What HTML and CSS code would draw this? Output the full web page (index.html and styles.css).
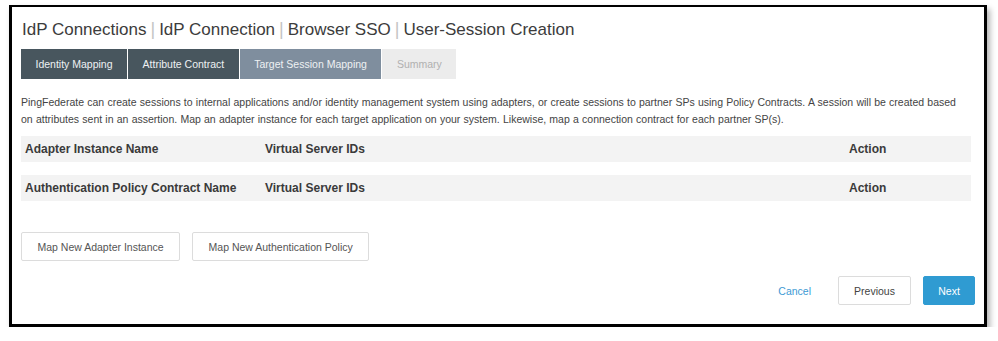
FILE: index.html
```html
<!DOCTYPE html>
<html>
<head>
<meta charset="utf-8">
<link rel="stylesheet" href="styles.css">
</head>
<body>
<div class="frame">
  <h1 class="title">IdP Connections<span class="sep">|</span>IdP Connection<span class="sep">|</span>Browser SSO<span class="sep">|</span>User-Session Creation</h1>
  <div class="tabs">
    <div class="tab done">Identity Mapping</div>
    <div class="tab done">Attribute Contract</div>
    <div class="tab active">Target Session Mapping</div>
    <div class="tab todo">Summary</div>
  </div>
  <p class="desc">PingFederate can create sessions to internal applications and/or identity management system using adapters, or create sessions to partner SPs using Policy Contracts. A session will be created based<br>on attributes sent in an assertion. Map an adapter instance for each target application on your system. Likewise, map a connection contract for each partner SP(s).</p>
  <div class="table-head">
    <div class="c1">Adapter Instance Name</div>
    <div class="c2">Virtual Server IDs</div>
    <div class="c3">Action</div>
  </div>
  <div class="table-head second">
    <div class="c1">Authentication Policy Contract Name</div>
    <div class="c2">Virtual Server IDs</div>
    <div class="c3">Action</div>
  </div>
  <div class="actions">
    <button class="btn">Map New Adapter Instance</button>
    <button class="btn">Map New Authentication Policy</button>
  </div>
  <div class="footer">
    <button class="link">Cancel</button>
    <button class="btn nav">Previous</button>
    <button class="btn primary">Next</button>
  </div>
</div>
</body>
</html>
```

FILE: styles.css
```css
html, body {
  margin: 0;
  padding: 0;
  background: #ffffff;
}
body {
  font-family: "Liberation Sans", Arial, sans-serif;
  color: #444;
}
.frame {
  margin: 5px 0 0 9px;
  width: 978px;
  height: 322px;
  box-sizing: border-box;
  border: 3px solid #000;
  border-top-width: 2px;
  box-shadow: 3px 4px 6px rgba(0,0,0,0.3);
  padding: 0 12px 0 9px;
  display: flex;
  flex-direction: column;
}
.title {
  margin: 0;
  padding-top: 12px;
  height: 30px;
  box-sizing: content-box;
  line-height: 20px;
  font-size: 17px;
  font-weight: normal;
  color: #3c3c3c;
  padding-left: 1px;
}
.sep {
  color: #c4c4c4;
  margin: 0 4px;
  font-size: 18px;
}
.tabs {
  display: flex;
  height: 30px;
  gap: 1px;
}
.tab {
  display: flex;
  align-items: center;
  padding: 0 14.5px;
  font-size: 10.5px;
  color: #eef1f3;
}
.tab.done {
  background: #48565e;
}
.tab.active {
  background: #7f8e9e;
}
.tab.todo {
  background: #ececec;
  color: #b0b0b0;
  padding: 0 14.5px;
}
.desc {
  margin: 15px 0 0 0;
  font-size: 10.5px;
  line-height: 17px;
  color: #444;
  white-space: nowrap;
  word-spacing: 0.3px;
}
.table-head {
  margin-top: 8px;
  height: 26px;
  width: 950px;
  background: #f3f3f3;
  display: flex;
  align-items: center;
  font-size: 12px;
  font-weight: bold;
  color: #3a3a3a;
}
.table-head.second {
  margin-top: 13px;
}
.c1 {
  width: 240px;
  padding-left: 4px;
}
.c2 {
  flex: 1;
}
.c3 {
  width: 122px;
}
.btn {
  font-family: "Liberation Sans", Arial, sans-serif;
  font-size: 10.5px;
  color: #555;
  background: #fff;
  border: 1px solid #dcdcdc;
  border-radius: 2px;
  height: 29px;
  padding: 0 15.5px;
  cursor: pointer;
}
.actions {
  margin-top: 31px;
  display: flex;
  gap: 12px;
}
.footer {
  margin-top: 15px;
  display: flex;
  justify-content: flex-end;
  align-items: center;
  gap: 12px;
  margin-right: -3px;
}
.link {
  font-family: "Liberation Sans", Arial, sans-serif;
  font-size: 10.5px;
  color: #3d9ad4;
  background: none;
  border: none;
  padding: 0 15px 0 0;
  cursor: pointer;
}
.btn.nav {
  width: 73px;
  padding: 0;
  height: 29px;
  color: #444;
}
.btn.primary {
  width: 52px;
  padding: 0;
  background: #2f9bd2;
  border-color: #2f9bd2;
  color: #fff;
}
```
